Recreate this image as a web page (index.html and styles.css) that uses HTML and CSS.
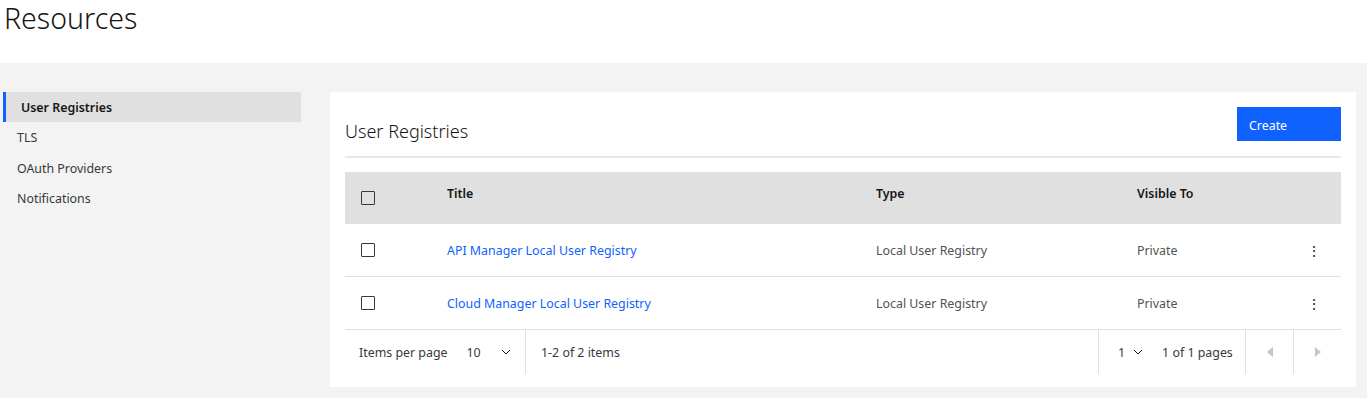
FILE: index.html
```html
<!DOCTYPE html>
<html lang="en">
<head>
  <meta charset="UTF-8">
  <title>Resources</title>
  <link rel="stylesheet" href="styles.css">
</head>
<body>
  <header class="page-header">
    <h1>Resources</h1>
  </header>

  <main class="page-body">
    <nav class="side-nav">
      <a class="nav-item active" href="#">User Registries</a>
      <a class="nav-item" href="#">TLS</a>
      <a class="nav-item" href="#">OAuth Providers</a>
      <a class="nav-item" href="#">Notifications</a>
    </nav>

    <section class="card">
      <div class="card-header">
        <h2>User Registries</h2>
        <button class="btn-create">Create</button>
      </div>

      <table class="data-table">
        <colgroup>
          <col class="col-check">
          <col class="col-title">
          <col class="col-type">
          <col class="col-visible">
          <col class="col-menu">
        </colgroup>
        <thead>
          <tr>
            <th><span class="checkbox"></span></th>
            <th>Title</th>
            <th>Type</th>
            <th>Visible To</th>
            <th></th>
          </tr>
        </thead>
        <tbody>
          <tr>
            <td><span class="checkbox"></span></td>
            <td><a href="#">API Manager Local User Registry</a></td>
            <td>Local User Registry</td>
            <td>Private</td>
            <td class="menu-cell"><span class="overflow">&#8942;</span></td>
          </tr>
          <tr>
            <td><span class="checkbox"></span></td>
            <td><a href="#">Cloud Manager Local User Registry</a></td>
            <td>Local User Registry</td>
            <td>Private</td>
            <td class="menu-cell"><span class="overflow">&#8942;</span></td>
          </tr>
        </tbody>
      </table>

      <div class="pagination">
        <div class="pg-left">
          <span class="pg-label">Items per page</span>
          <span class="pg-select">10
            <svg class="chev" width="10" height="6" viewBox="0 0 10 6"><path d="M1 1l4 4 4-4" fill="none" stroke="#161616" stroke-width="1"/></svg>
          </span>
        </div>
        <div class="pg-count">1-2 of 2 items</div>
        <div class="pg-right">
          <span class="pg-page">1
            <svg class="chev" width="10" height="6" viewBox="0 0 10 6"><path d="M1 1l4 4 4-4" fill="none" stroke="#161616" stroke-width="1"/></svg>
          </span>
          <span class="pg-of">1 of 1 pages</span>
        </div>
        <button class="pg-btn">
          <svg width="6" height="10" viewBox="0 0 6 10"><path d="M6 0v10L0 5z" fill="#c6c6c6"/></svg>
        </button>
        <button class="pg-btn">
          <svg width="6" height="10" viewBox="0 0 6 10"><path d="M0 0v10l6-5z" fill="#c6c6c6"/></svg>
        </button>
      </div>
    </section>
  </main>
</body>
</html>
```

FILE: styles.css
```css
body {
  margin: 0;
  font-family: "Noto Sans", "Open Sans", sans-serif;
  color: #161616;
  background: #fff;
}

.page-header {
  height: 63px;
  padding-left: 4px;
}

.page-header h1 {
  margin: 0;
  font-size: 28.5px;
  font-weight: 300;
  line-height: 36px;
}

.page-body {
  display: flex;
  align-items: flex-start;
  gap: 29px;
  background: #f3f3f3;
  min-height: 335px;
  padding: 29px 11px 0 3px;
  box-sizing: border-box;
}

.side-nav {
  width: 298px;
  display: flex;
  flex-direction: column;
}

.nav-item {
  height: 30.7px;
  line-height: 32px;
  padding-left: 14px;
  font-size: 12.4px;
  color: #393939;
  text-decoration: none;
}

.nav-item.active {
  height: 30px;
  background: #e0e0e0;
  border-left: 3px solid #0f62fe;
  padding-left: 15px;
  font-weight: 600;
  color: #161616;
}

.card {
  flex: 1;
  background: #fff;
  padding: 15px 15px 13px;
}

.card-header {
  display: flex;
  justify-content: space-between;
  align-items: flex-start;
  height: 49px;
  border-bottom: 2px solid #e8e8e8;
}

.card-header h2 {
  margin: 12px 0 0;
  font-size: 18px;
  font-weight: 300;
  line-height: 24px;
}

.btn-create {
  width: 104px;
  height: 34px;
  padding: 2px 12px 0;
  text-align: left;
  border: none;
  background: #0f62fe;
  color: #fff;
  font-family: inherit;
  font-size: 12.4px;
}

.data-table {
  width: 100%;
  margin-top: 14px;
  border-collapse: collapse;
  table-layout: fixed;
  font-size: 12.4px;
}

.col-check { width: 102px; }
.col-title { width: 429px; }
.col-type { width: 261px; }
.col-visible { width: 153px; }
.col-menu { width: 51px; }

.data-table th {
  height: 42px;
  background: #e0e0e0;
  text-align: left;
  font-weight: 600;
  padding: 0 0 10px;
}

.data-table td {
  height: 52px;
  padding: 0;
  color: #525252;
  border-bottom: 1px solid #e0e0e0;
}

.data-table th:first-child,
.data-table td:first-child {
  padding-left: 16px;
}

.data-table a {
  color: #0f62fe;
  text-decoration: none;
}

.checkbox {
  display: block;
  width: 12px;
  height: 12px;
  border: 1px solid #393939;
  background: #fff;
  border-radius: 1px;
}

.data-table th .checkbox {
  margin-top: 10px;
  background: transparent;
}

.menu-cell {
  text-align: center;
}

.overflow {
  font-size: 14px;
  color: #161616;
  padding-right: 4px;
}

.pagination {
  display: flex;
  height: 44px;
  font-size: 12.4px;
  color: #393939;
}

.pagination > * {
  display: flex;
  align-items: center;
}

.pg-left {
  padding-left: 14px;
  width: 166px;
  border-right: 1px solid #e0e0e0;
}

.pg-select {
  display: flex;
  align-items: center;
  margin-left: 19px;
}

.pg-select .chev {
  margin-left: 20px;
}

.pg-count {
  flex: 1;
  padding-left: 15px;
}

.pg-right {
  width: 147px;
  padding-left: 19px;
  box-sizing: border-box;
  border-left: 1px solid #e0e0e0;
}

.pg-page {
  display: flex;
  align-items: center;
}

.pg-page .chev {
  margin-left: 8px;
}

.pg-of {
  margin-left: 19px;
}

.pg-btn {
  width: 48px;
  justify-content: center;
  background: none;
  border: none;
  border-left: 1px solid #e0e0e0;
  padding: 0;
}
```
